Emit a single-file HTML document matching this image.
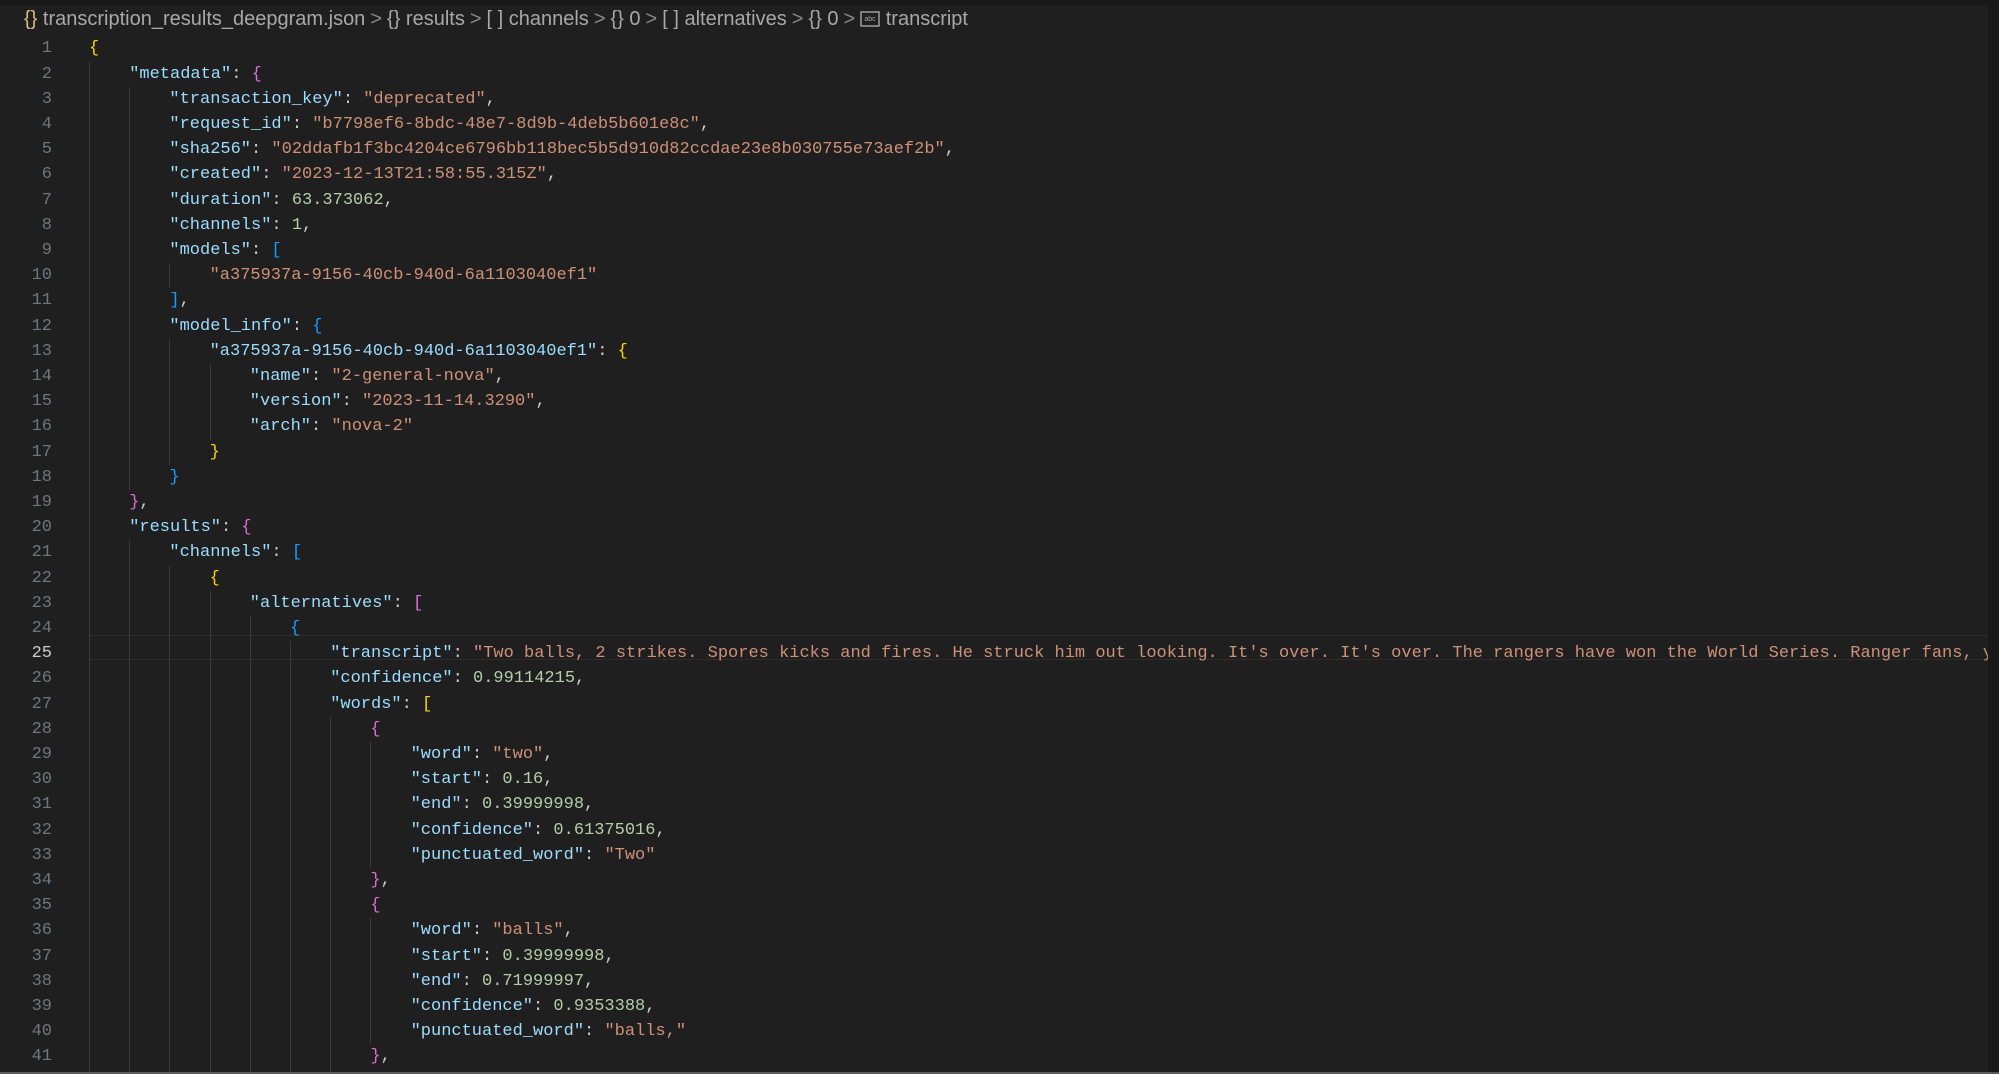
<!DOCTYPE html>
<html><head><meta charset="utf-8"><style>
html,body{margin:0;padding:0;background:#1f1f1f;width:1999px;height:1074px;overflow:hidden;position:relative}
.top{position:absolute;left:0;top:0;width:1999px;height:5px;background:#181818;}
.bc{position:absolute;left:24px;top:6px;height:26px;line-height:26px;font-family:"Liberation Sans",sans-serif;font-size:20px;color:#a8a8a8;white-space:nowrap;letter-spacing:0px}
.bc .y{color:#d7ba7d}
.bc .s{color:#8a8a8a;margin:0 5px}
.ln{position:absolute;left:0;width:52px;text-align:right;font-family:"Liberation Mono",monospace;font-size:17px;color:#6e7681;height:25.2px;line-height:25.2px}
.ln.cur{color:#cccccc}
.cl{position:absolute;left:89px;font-family:"Liberation Mono",monospace;font-size:17px;white-space:pre;height:25.2px;line-height:25.2px;color:#cccccc}
.g{position:absolute;width:1px;background:#3b3b3b}
.k{color:#9cdcfe}.s1{color:#ce9178}.n{color:#b5cea8}
.b1{color:#ffd700}.b2{color:#da70d6}.b3{color:#179fff}
.hl{position:absolute;left:89px;width:1899px;height:23px;border-top:1px solid #2c2c2c;border-bottom:1px solid #2c2c2c}
.sb{position:absolute;left:1988px;top:5px;width:11px;height:1069px;background:#191919}
.bot{position:absolute;left:0;top:1072px;width:1999px;height:2px;background:#5a5a5a}
</style></head><body>
<div class="top"></div>
<div class="bc"><span class="y">{}</span> transcription_results_deepgram.json<span class="s">&gt;</span>{} results<span class="s">&gt;</span>[ ] channels<span class="s">&gt;</span>{} 0<span class="s">&gt;</span>[ ] alternatives<span class="s">&gt;</span>{} 0<span class="s">&gt;</span><svg width="20" height="16" viewBox="0 0 20 16" style="vertical-align:-2px"><rect x="1" y="1" width="18" height="14" fill="none" stroke="#a8a8a8" stroke-width="1.4"/><text x="10" y="10" font-size="7" fill="#a8a8a8" text-anchor="middle" font-family="Liberation Sans">abc</text></svg> transcript</div>
<div class="hl" style="top:635px"></div>
<div id="c"></div>
<div class="sb"></div>
<div class="bot"></div>
<script>
const L=[
[0,'<span class="b1">{</span>'],
[1,'<span class="k">"metadata"</span>: <span class="b2">{</span>'],
[2,'<span class="k">"transaction_key"</span>: <span class="s1">"deprecated"</span>,'],
[2,'<span class="k">"request_id"</span>: <span class="s1">"b7798ef6-8bdc-48e7-8d9b-4deb5b601e8c"</span>,'],
[2,'<span class="k">"sha256"</span>: <span class="s1">"02ddafb1f3bc4204ce6796bb118bec5b5d910d82ccdae23e8b030755e73aef2b"</span>,'],
[2,'<span class="k">"created"</span>: <span class="s1">"2023-12-13T21:58:55.315Z"</span>,'],
[2,'<span class="k">"duration"</span>: <span class="n">63.373062</span>,'],
[2,'<span class="k">"channels"</span>: <span class="n">1</span>,'],
[2,'<span class="k">"models"</span>: <span class="b3">[</span>'],
[3,'<span class="s1">"a375937a-9156-40cb-940d-6a1103040ef1"</span>'],
[2,'<span class="b3">]</span>,'],
[2,'<span class="k">"model_info"</span>: <span class="b3">{</span>'],
[3,'<span class="k">"a375937a-9156-40cb-940d-6a1103040ef1"</span>: <span class="b1">{</span>'],
[4,'<span class="k">"name"</span>: <span class="s1">"2-general-nova"</span>,'],
[4,'<span class="k">"version"</span>: <span class="s1">"2023-11-14.3290"</span>,'],
[4,'<span class="k">"arch"</span>: <span class="s1">"nova-2"</span>'],
[3,'<span class="b1">}</span>'],
[2,'<span class="b3">}</span>'],
[1,'<span class="b2">}</span>,'],
[1,'<span class="k">"results"</span>: <span class="b2">{</span>'],
[2,'<span class="k">"channels"</span>: <span class="b3">[</span>'],
[3,'<span class="b1">{</span>'],
[4,'<span class="k">"alternatives"</span>: <span class="b2">[</span>'],
[5,'<span class="b3">{</span>'],
[6,'<span class="k">"transcript"</span>: <span class="s1">"Two balls, 2 strikes. Spores kicks and fires. He struck him out looking. It\'s over. It\'s over. The rangers have won the World Series. Ranger fans, yo</span>'],
[6,'<span class="k">"confidence"</span>: <span class="n">0.99114215</span>,'],
[6,'<span class="k">"words"</span>: <span class="b1">[</span>'],
[7,'<span class="b2">{</span>'],
[8,'<span class="k">"word"</span>: <span class="s1">"two"</span>,'],
[8,'<span class="k">"start"</span>: <span class="n">0.16</span>,'],
[8,'<span class="k">"end"</span>: <span class="n">0.39999998</span>,'],
[8,'<span class="k">"confidence"</span>: <span class="n">0.61375016</span>,'],
[8,'<span class="k">"punctuated_word"</span>: <span class="s1">"Two"</span>'],
[7,'<span class="b2">}</span>,'],
[7,'<span class="b2">{</span>'],
[8,'<span class="k">"word"</span>: <span class="s1">"balls"</span>,'],
[8,'<span class="k">"start"</span>: <span class="n">0.39999998</span>,'],
[8,'<span class="k">"end"</span>: <span class="n">0.71999997</span>,'],
[8,'<span class="k">"confidence"</span>: <span class="n">0.9353388</span>,'],
[8,'<span class="k">"punctuated_word"</span>: <span class="s1">"balls,"</span>'],
[7,'<span class="b2">}</span>,'],
[7,'<span class="b2">{</span>']
];
let h='';const P=40.2,LH=25.2,T0=36.4;
L.forEach((l,i)=>{const t=T0+i*LH;
h+=`<div class="ln${i==24?' cur':''}" style="top:${t}px">${i+1}</div>`;
for(let k=0;k<l[0];k++){h+=`<div class="g" style="left:${89+k*P}px;top:${t}px;height:${LH}px"></div>`;}
h+=`<div class="cl" style="top:${t}px;left:${89+l[0]*P}px">${l[1]}</div>`;});
document.getElementById('c').innerHTML=h;
</script>
</body></html>
